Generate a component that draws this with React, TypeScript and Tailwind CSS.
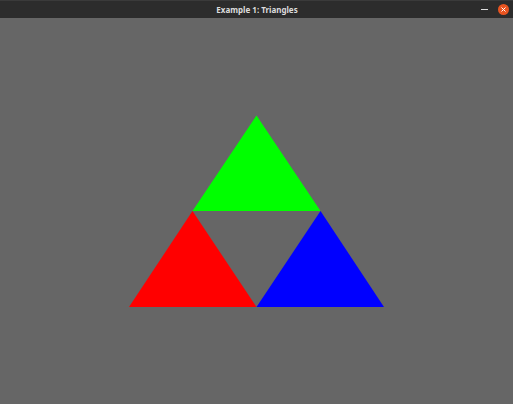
export default function App() {
  return (
    <div className="w-[513px] h-[404px] flex flex-col bg-[#666666] overflow-hidden">
      {/* title bar */}
      <div className="h-[18px] flex-shrink-0 bg-[#2c2c2c] border-t border-[#3a3a3a] flex items-center relative">
        <div className="flex-1 text-center text-[8px] font-bold text-[#dcdcdc] leading-none pl-[1px]" style={{ fontFamily: '"Noto Sans", sans-serif' }}>
          Example 1: Triangles
        </div>
        <div className="absolute right-[4px] top-[3px] flex items-center gap-[10px]">
          <div className="w-[7px] h-[1px] bg-[#dcdcdc]" />
          <div className="w-[11px] h-[11px] rounded-full bg-[#e95420] flex items-center justify-center">
            <svg width="5" height="5" viewBox="0 0 5 5">
              <path d="M0.5 0.5 L4.5 4.5 M4.5 0.5 L0.5 4.5" stroke="#ffffff" strokeWidth="1" />
            </svg>
          </div>
        </div>
      </div>
      {/* canvas */}
      <div className="flex-1">
        <svg width="513" height="386" viewBox="0 18 513 386" className="block">
          <polygon points="256.5,115.5 192.5,211 320.5,211" fill="#00ff00" />
          <polygon points="192.5,211 129,307 256.5,307" fill="#ff0000" />
          <polygon points="320.5,211 256.5,307 384,307" fill="#0000ff" />
        </svg>
      </div>
    </div>
  );
}
